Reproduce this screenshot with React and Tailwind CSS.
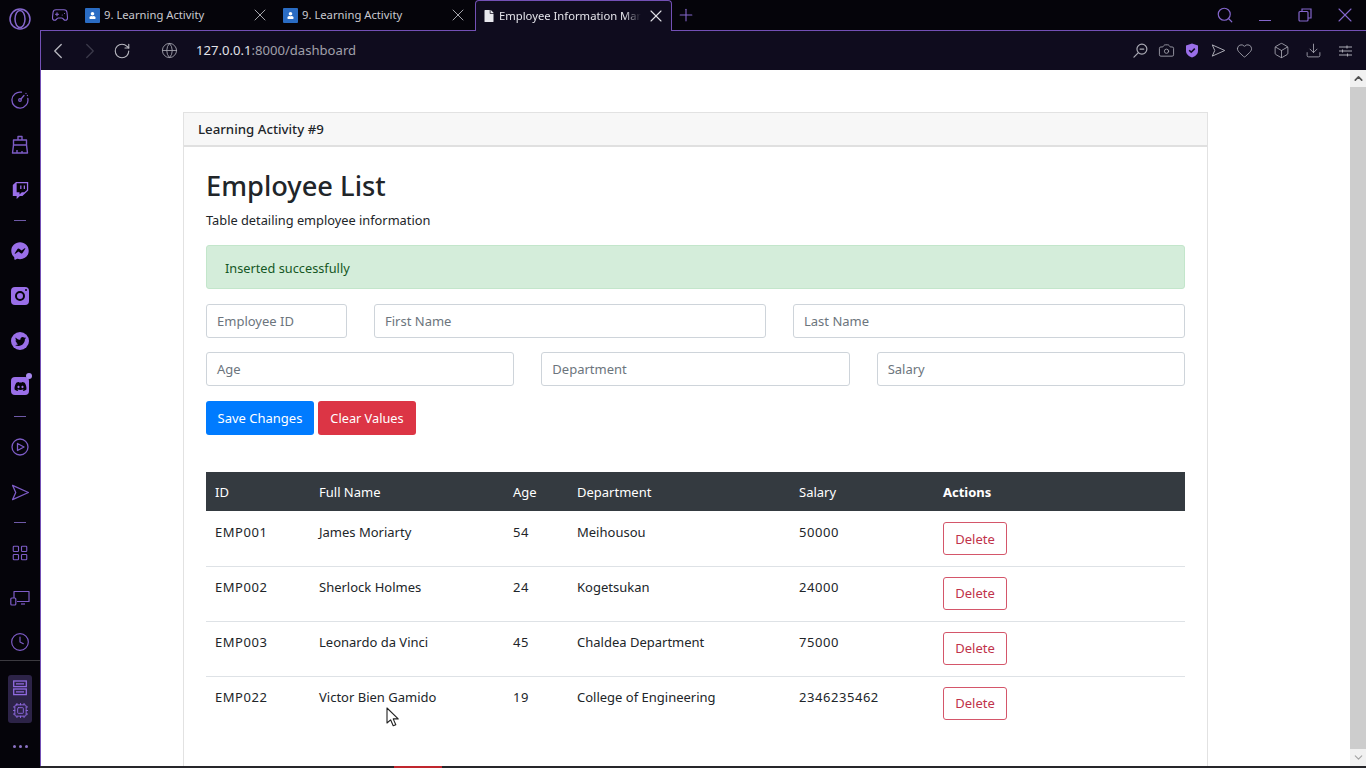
import React from "react";
import {
  ChevronLeft,
  ChevronRight,
  ChevronUp,
  ChevronDown,
  RotateCw,
  Globe,
  Search,
  X,
  Plus,
  Camera,
  Heart,
  Box,
  Download,
  Clock,
  Gamepad2,
  Cpu,
  LayoutGrid,
} from "lucide-react";
import { FaFacebookMessenger, FaTwitch, FaTwitter, FaDiscord, FaUser, FaFile } from "react-icons/fa";

const employees = [
  { id: "EMP001", name: "James Moriarty", age: 54, dept: "Meihousou", salary: 50000 },
  { id: "EMP002", name: "Sherlock Holmes", age: 24, dept: "Kogetsukan", salary: 24000 },
  { id: "EMP003", name: "Leonardo da Vinci", age: 45, dept: "Chaldea Department", salary: 75000 },
  { id: "EMP022", name: "Victor Bien Gamido", age: 19, dept: "College of Engineering", salary: 2346235462 },
];

function SendIcon({ size = 22, className = "" }) {
  return (
    <svg width={size} height={size} viewBox="0 0 24 24" fill="none" stroke="currentColor" strokeWidth="1.6" strokeLinejoin="round" className={className}>
      <path d="M2 3l20 9-20 9 4-9-4-9z" />
    </svg>
  );
}

function Dash() {
  return (
    <div className="flex h-[16px] items-center justify-center">
      <div className="h-px w-[12px] bg-[#6f5aa8]" />
    </div>
  );
}

function SideItem({ children }) {
  return <div className="flex h-[45px] items-center justify-center text-[#7d5cc6]">{children}</div>;
}

function Sidebar() {
  return (
    <aside className="flex h-full w-[40px] shrink-0 flex-col bg-[#05040a]">
      <div className="flex h-[77.5px] justify-center pt-[7px]">
        <svg width="24" height="24" viewBox="0 0 24 24" fill="none" stroke="#8466cc" strokeWidth="1.5">
          <circle cx="12" cy="12" r="10" />
          <ellipse cx="12" cy="12" rx="5" ry="8.5" />
        </svg>
      </div>
      <SideItem>
        <svg width="18" height="18" viewBox="0 0 18 18" fill="none" stroke="currentColor" strokeWidth="1.3" strokeLinecap="round">
          <path d="M10.5 1.2A8 8 0 1 0 16.8 7.5" />
          <circle cx="9" cy="9" r="1.3" />
          <path d="M10 8l3-3.5" />
          <path d="M15 2.5v0M16.4 4.5v0" />
        </svg>
      </SideItem>
      <SideItem>
        <svg width="18" height="20" viewBox="0 0 18 20" fill="none" stroke="currentColor" strokeWidth="1.4" strokeLinejoin="round">
          <path d="M7 5V1.5h4V5" />
          <path d="M2.5 5h13v5h-13z" />
          <path d="M2.5 10L1.5 18h15l-1-8" />
          <path d="M6 18v-3M11 18v-2" />
        </svg>
      </SideItem>
      <SideItem>
        <FaTwitch size={17} className="text-[#9a6fe8]" />
      </SideItem>
      <Dash />
      <SideItem>
        <FaFacebookMessenger size={18} className="text-[#9a6fe8]" />
      </SideItem>
      <SideItem>
        <div className="relative flex h-[18px] w-[18px] items-center justify-center rounded-[4px] bg-[#9a6fe8]">
          <div className="h-[10px] w-[10px] rounded-full border-2 border-[#05040a]" />
          <div className="absolute right-[2px] top-[2px] h-[2px] w-[2px] rounded-full bg-[#05040a]" />
        </div>
      </SideItem>
      <SideItem>
        <div className="flex h-[18px] w-[18px] items-center justify-center rounded-full bg-[#9a6fe8]">
          <FaTwitter size={11} className="text-[#05040a]" />
        </div>
      </SideItem>
      <SideItem>
        <div className="relative flex h-[18px] w-[18px] items-center justify-center rounded-[4px] bg-[#9a6fe8]">
          <FaDiscord size={13} className="text-[#05040a]" />
          <div className="absolute right-[-3px] top-[-4px] h-[6px] w-[6px] rounded-full bg-[#a98af0]" />
        </div>
      </SideItem>
      <Dash />
      <SideItem>
        <svg width="18" height="18" viewBox="0 0 18 18" fill="none" stroke="currentColor" strokeWidth="1.3" strokeLinejoin="round">
          <circle cx="9" cy="9" r="8" />
          <path d="M6.5 5.5L13 9l-6.5 3.5z" />
        </svg>
      </SideItem>
      <SideItem>
        <SendIcon size={19} />
      </SideItem>
      <Dash />
      <SideItem>
        <LayoutGrid size={18} strokeWidth={1.5} />
      </SideItem>
      <SideItem>
        <svg width="20" height="16" viewBox="0 0 20 16" fill="none" stroke="currentColor" strokeWidth="1.2" strokeLinejoin="round">
          <path d="M4 8V1.5h15v10H7" />
          <path d="M11 14h4" />
          <rect x="0.8" y="8" width="5" height="7" rx="1" />
        </svg>
      </SideItem>
      <div className="flex h-[39px] justify-center pt-[11px] text-[#7d5cc6]">
        <Clock size={20} strokeWidth={1.4} />
      </div>
      <div className="h-px bg-[#3b3a40]" />
      <div className="mx-[8px] mt-[14px] flex h-[48px] w-[24px] flex-col items-center gap-[6px] rounded-[3px] bg-[#2c2347] pt-[5px] text-[#8f6ae0]">
        <svg width="14" height="16" viewBox="0 0 14 16" fill="none" stroke="currentColor" strokeWidth="1.3">
          <rect x="0.7" y="1" width="12.6" height="5.6" />
          <rect x="0.7" y="9" width="12.6" height="5.6" />
          <path d="M3 3.8h8M3 11.8h8" />
        </svg>
        <Cpu size={17} strokeWidth={1.3} />
      </div>
      <div className="mt-[22px] flex justify-center gap-[3px]">
        <div className="h-[3px] w-[3px] rounded-full bg-[#8a72c4]" />
        <div className="h-[3px] w-[3px] rounded-full bg-[#8a72c4]" />
        <div className="h-[3px] w-[3px] rounded-full bg-[#8a72c4]" />
      </div>
    </aside>
  );
}

function Tab({ title }) {
  return (
    <div className="flex h-[30px] w-[198px] shrink-0 items-center pl-[6px] pr-[7px]">
      <div className="flex h-[15px] w-[15px] items-center justify-center rounded-[1px] bg-[#2a6cc4]">
        <FaUser size={7} className="text-white" />
      </div>
      <span className="ml-[4px] flex-1 truncate text-[11.25px] text-[#c9c9cf]">{title}</span>
      <X size={20} strokeWidth={1.2} className="text-[#a5a5ac]" />
    </div>
  );
}

function TabStrip() {
  return (
    <div className="flex h-[31px] shrink-0 items-start bg-[#05040a]">
      <div className="flex h-[31px] w-[39px] shrink-0 items-center justify-center border-b border-[#7350b5]">
        <Gamepad2 size={18} strokeWidth={1.5} className="text-[#8466cc]" />
      </div>
      <div className="flex h-[31px] shrink-0 border-b border-[#7350b5]">
        <Tab title="9. Learning Activity" />
        <Tab title="9. Learning Activity" />
      </div>
      <div className="flex h-[31px] w-[197px] shrink-0 items-center rounded-t-[4px] border-x border-t border-[#7350b5] bg-[#0f0c1e] pl-[7px] pr-[5px]">
        <FaFile size={12} className="text-[#e8e8ee]" />
        <span className="ml-[4px] w-[142px] shrink-0 overflow-hidden whitespace-nowrap text-[11.25px] text-[#e4e4ea] [mask-image:linear-gradient(to_right,black_88%,transparent)]">
          Employee Information Management
        </span>
        <X size={20} strokeWidth={1.3} className="ml-auto text-[#e0e0e6]" />
      </div>
      <div className="flex h-[31px] flex-1 items-center border-b border-[#7350b5] pl-[4px]">
        <Plus size={20} strokeWidth={1.3} className="text-[#8466cc]" />
        <div className="ml-auto flex items-center text-[#8466cc]">
          <Search size={18} strokeWidth={1.6} />
          <div className="ml-[25px] mt-[11px] h-px w-[12px] bg-[#8466cc]" />
          <svg width="14" height="14" viewBox="0 0 14 14" fill="none" stroke="currentColor" strokeWidth="1.2" className="ml-[27px]">
            <rect x="1" y="3.5" width="9" height="9.5" rx="1" />
            <path d="M4 3.5V1h9v9h-3" />
          </svg>
          <X size={24} strokeWidth={1.1} className="ml-[21px] mr-[9px]" />
        </div>
      </div>
    </div>
  );
}

function Slot({ children }) {
  return <div className="flex h-[26px] w-[26px] items-center justify-center">{children}</div>;
}

function AddressBar() {
  return (
    <div className="flex h-[39px] shrink-0 items-center border-l border-[#7350b5] bg-[#0f0c1e] text-[#a9a9b3]">
      <ChevronLeft size={26} strokeWidth={1.2} className="ml-[4px] text-[#b8b8c0]" />
      <ChevronRight size={26} strokeWidth={1.2} className="ml-[6px] text-[#3c3a4a]" />
      <RotateCw size={18} strokeWidth={1.5} className="ml-[10px] text-[#b8b8c0]" />
      <Globe size={17} strokeWidth={1.2} className="ml-[30px]" />
      <span className="ml-[18px] pt-px text-[13.1px] text-[#e2e2e8]">
        127.0.0.1<span className="text-[#a0a0aa]">:8000/dashboard</span>
      </span>
      <div className="ml-auto flex items-center">
        <Slot>
          <svg width="15" height="15" viewBox="0 0 16 16" fill="none" stroke="currentColor" strokeWidth="1.3" strokeLinecap="round">
            <circle cx="9.5" cy="6.5" r="5.3" />
            <path d="M5.5 10.5L1 15M7.5 6.5h4" />
          </svg>
        </Slot>
        <Slot>
          <Camera size={17} strokeWidth={1.2} />
        </Slot>
        <Slot>
          <svg width="14" height="15" viewBox="0 0 14 15">
            <path d="M7 0.5l6 2v5.5c0 3.2-3 5.6-6 6.5-3-0.9-6-3.3-6-6.5V2.5z" fill="#9a6fe8" />
            <path d="M4.2 7.2l2 2 3.6-3.6" fill="none" stroke="#0f0c1e" strokeWidth="1.6" />
          </svg>
        </Slot>
        <Slot>
          <SendIcon size={15} />
        </Slot>
        <Slot>
          <Heart size={17} strokeWidth={1.2} />
        </Slot>
        <div className="ml-[11px]">
          <Slot>
            <Box size={17} strokeWidth={1.2} />
          </Slot>
        </div>
        <div className="ml-[6px]">
          <Slot>
            <Download size={17} strokeWidth={1.2} />
          </Slot>
        </div>
        <div className="ml-[6px] mr-[8px]">
          <Slot>
            <svg width="13" height="12" viewBox="0 0 13 12" fill="none" stroke="currentColor" strokeWidth="1.1">
              <path d="M0 2h13M0 6h13M0 10h13M8 0.5v3M3.5 4.5v3M8.5 8.5v3" />
            </svg>
          </Slot>
        </div>
      </div>
    </div>
  );
}

function Field({ placeholder }) {
  return (
    <div className="flex h-[34px] items-center rounded-[3px] border border-[#ced4da] bg-white px-[10px] pt-[2px] text-[13px] text-[#6c757d]">
      {placeholder}
    </div>
  );
}

function EmployeeCard() {
  return (
    <div className="mx-auto mt-[42px] w-[1025px] shrink-0 border border-[#e2e2e2] bg-white text-[#212529]">
      <div className="flex h-[34px] items-center border-b-2 border-[#e0e0e0] bg-[#f7f7f7] pl-[14px] pt-[2px] text-[13.25px] font-medium text-[#212529]">
        Learning Activity #9
      </div>
      <div className="px-[22px]">
        <h1 className="mt-[20px] h-[38px] text-[27.25px] leading-[38px] font-medium text-[#212529]">Employee List</h1>
        <p className="mt-[5px] h-[20px] text-[12.8px] leading-[20px]">Table detailing employee information</p>
        <div className="mt-[15px] flex h-[44px] items-center rounded-[3px] border border-[#c3e6cb] bg-[#d4edda] pl-[18px] pt-[3px] text-[12.75px] text-[#155724]">
          Inserted successfully
        </div>
        <div className="mt-[15px] grid grid-cols-[141fr_392fr_392fr] gap-[27px]">
          <Field placeholder="Employee ID" />
          <Field placeholder="First Name" />
          <Field placeholder="Last Name" />
        </div>
        <div className="mt-[14px] grid grid-cols-3 gap-[27px]">
          <Field placeholder="Age" />
          <Field placeholder="Department" />
          <Field placeholder="Salary" />
        </div>
        <div className="mt-[15px] flex gap-[4px]">
          <button className="h-[34px] w-[108px] rounded-[3px] bg-[#007bff] pt-[2px] text-[13px] text-white">Save Changes</button>
          <button className="h-[34px] w-[98px] rounded-[3px] bg-[#dc3545] pt-[2px] text-[12.75px] text-white">Clear Values</button>
        </div>
        <table className="mt-[37px] w-full table-fixed border-collapse text-left text-[13px]">
          <colgroup>
            <col className="w-[104px]" />
            <col className="w-[194px]" />
            <col className="w-[64px]" />
            <col className="w-[222px]" />
            <col className="w-[144px]" />
            <col />
          </colgroup>
          <thead>
            <tr className="h-[39px] bg-[#343a40] text-white">
              <th className="pl-[9px] pt-[3px] font-normal">ID</th>
              <th className="pl-[9px] pt-[3px] font-normal">Full Name</th>
              <th className="pl-[9px] pt-[3px] font-normal">Age</th>
              <th className="pl-[9px] pt-[3px] font-normal">Department</th>
              <th className="pl-[9px] pt-[3px] font-normal">Salary</th>
              <th className="pl-[9px] pt-[3px] font-bold">Actions</th>
            </tr>
          </thead>
          <tbody>
            {employees.map((emp, i) => {
              const cell = i === 0 ? "pl-[9px] pt-[12px] align-top" : "pl-[9px] pt-[11px] align-top";
              const numCell = i === 0 ? "pl-[9px] pt-[12px] align-top tracking-[0.55px]" : "pl-[9px] pt-[11px] align-top tracking-[0.55px]";
              const btnCell = i === 0 ? "pl-[9px] pt-[11px] align-top" : "pl-[9px] pt-[10px] align-top";
              return (
                <tr key={emp.id} className={i < employees.length - 1 ? "h-[55px] border-b border-[#dee2e6]" : "h-[55px]"}>
                  <td className={numCell}>{emp.id}</td>
                  <td className={cell}>{emp.name}</td>
                  <td className={numCell}>{emp.age}</td>
                  <td className={cell}>{emp.dept}</td>
                  <td className={numCell}>{emp.salary}</td>
                  <td className={btnCell}>
                    <button className="block h-[33px] w-[64px] rounded-[3px] border border-[#d4566a] pt-[2px] text-[13px] text-[#c0334a]">Delete</button>
                  </td>
                </tr>
              );
            })}
          </tbody>
        </table>
        <div className="h-[60px]" />
      </div>
    </div>
  );
}

function Scrollbar() {
  return (
    <div className="flex w-[16px] shrink-0 flex-col bg-[#cdcdcd]">
      <div className="flex h-[17px] items-center justify-center bg-[#f1f1f1]">
        <ChevronUp size={13} strokeWidth={3} className="text-[#505050]" />
      </div>
      <div className="flex-1" />
      <div className="flex h-[17px] items-center justify-center bg-[#f1f1f1]">
        <ChevronDown size={13} strokeWidth={2} className="text-[#a3a3a3]" />
      </div>
    </div>
  );
}

export default function App() {
  return (
    <div className="relative flex h-screen w-full overflow-hidden bg-[#05040a] font-['Noto_Sans',sans-serif]">
      <Sidebar />
      <div className="flex min-w-0 flex-1 flex-col">
        <TabStrip />
        <AddressBar />
        <div className="flex min-h-0 flex-1 border-l border-[#7350b5]">
          <div className="flex min-w-0 flex-1 flex-col overflow-hidden bg-white">
            <EmployeeCard />
          </div>
          <Scrollbar />
        </div>
        <div className="flex h-[2px] shrink-0 bg-[#26262a]">
          <div className="w-[354px]" />
          <div className="w-[48px] bg-[#c0262e]" />
        </div>
      </div>
      <svg width="14" height="20" viewBox="0 0 14 20" className="absolute left-[386px] top-[707px]">
        <path d="M1 1v15l3.6-3.2 2.6 6 2.6-1.1-2.6-5.8h5z" fill="#fff" stroke="#222" strokeWidth="1.1" strokeLinejoin="round" />
      </svg>
    </div>
  );
}
